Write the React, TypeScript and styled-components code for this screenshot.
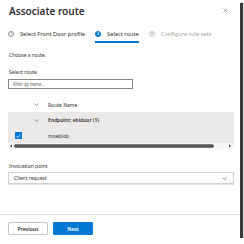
import React from "react";
import styled, { createGlobalStyle } from "styled-components";

const Global = createGlobalStyle`
  html, body { margin: 0; padding: 0; background: #ffffff; }
  body { font-family: "Noto Sans", "Open Sans", sans-serif; color: #323130; }
  * { box-sizing: border-box; }
`;

const Panel = styled.div`
  width: 240px;
  height: 238px;
  background: #fff;
  box-shadow: 3px 3px 1px 0 rgba(25, 25, 25, 0.85);
  display: flex;
  flex-direction: column;
`;

const Header = styled.div`
  display: flex;
  justify-content: space-between;
  align-items: flex-start;
  padding: 4px 12px 0 9px;
`;

const Title = styled.h1`
  margin: 0;
  font-size: 10px;
  font-weight: 600;
  line-height: 14px;
`;

const Close = styled.span`
  display: flex;
  margin-top: 4px;
`;

const Steps = styled.div`
  display: flex;
  padding-left: 8px;
  margin-top: 9px;
  gap: 10px;
`;

const Step = styled.div<{ $active?: boolean; $disabled?: boolean }>`
  display: flex;
  align-items: center;
  gap: 6px;
  height: 16px;
  font-size: 5.7px;
  white-space: nowrap;
  color: ${(p) => (p.$disabled ? "#a19f9d" : "#323130")};
  border-bottom: 2px solid ${(p) => (p.$active ? "#0078d4" : "transparent")};
`;

const Circle = styled.span<{ $active?: boolean; $disabled?: boolean }>`
  width: 6px;
  height: 6px;
  border-radius: 50%;
  border: 0.6px solid ${(p) => (p.$active ? "#0078d4" : p.$disabled ? "#c8c6c4" : "#8a8886")};
  background: ${(p) => (p.$active ? "#0078d4" : "transparent")};
  color: ${(p) => (p.$active ? "#fff" : "#a19f9d")};
  font-size: 3px;
  font-weight: 700;
  display: flex;
  align-items: center;
  justify-content: center;
  flex: none;
`;

const Body = styled.div`
  padding: 0 6px 0 8px;
  flex: 1;
  display: flex;
  flex-direction: column;
`;

const Text = styled.div`
  font-size: 5px;
  margin-left: 1px;
`;

const Intro = styled(Text)`
  margin-top: 9px;
`;

const Label = styled(Text)<{ $top: number }>`
  margin-top: ${(p) => p.$top}px;
`;

const Filter = styled.div`
  margin-top: 4px;
  width: 125px;
  height: 10px;
  border: 0.6px solid #8a8886;
  font-size: 4.5px;
  font-style: italic;
  color: #605e5c;
  display: flex;
  align-items: center;
  padding-left: 4px;
`;

const Table = styled.div`
  margin-top: 8px;
  display: flex;
  flex-direction: column;
`;

const Row = styled.div<{ $h: number }>`
  height: ${(p) => p.$h}px;
  display: grid;
  grid-template-columns: 20px 16px 1fr;
  align-items: center;
  font-size: 5px;
`;

const Cell = styled.span`
  padding-left: 4px;
`;

const Group = styled.div`
  background: #ebe9e7;
  display: flex;
  flex-direction: column;
`;

const Bold = styled(Cell)`
  font-weight: 600;
`;

const Check = styled.span`
  width: 7px;
  height: 7px;
  background: #0078d4;
  justify-self: center;
  margin-left: 1px;
  display: flex;
  align-items: center;
  justify-content: center;
`;

const ScrollBar = styled.div`
  display: block;
  height: 6px;
  line-height: 0;
  background: #f5f5f5;
`;

const Select = styled.div`
  margin-top: 3px;
  height: 12px;
  border: 0.6px solid #d2d0ce;
  box-shadow: 0 0.6px 0.6px rgba(0, 0, 0, 0.12);
  display: flex;
  align-items: center;
  justify-content: space-between;
  padding: 0 6px 0 5px;
  font-size: 5px;
`;

const Footer = styled.div`
  border-top: 0.8px solid #e1dfdd;
  padding: 7px 8px 0;
  height: 24px;
  display: flex;
  gap: 5px;
`;

const Button = styled.button<{ $primary?: boolean }>`
  width: 40px;
  height: 13px;
  padding: 0;
  font-family: inherit;
  font-size: 5px;
  font-weight: 600;
  border-radius: 1px;
  border: 0.6px solid ${(p) => (p.$primary ? "#0078d4" : "#c8c6c4")};
  background: ${(p) => (p.$primary ? "#0078d4" : "#fff")};
  color: ${(p) => (p.$primary ? "#fff" : "#323130")};
`;

const Chevron = () => (
  <svg width="5" height="3" viewBox="0 0 10 6" style={{ justifySelf: "center" }}>
    <path d="M1 1l4 4 4-4" fill="none" stroke="#605e5c" strokeWidth="1.2" />
  </svg>
);

export default function App() {
  return (
    <>
      <Global />
      <Panel>
        <Header>
          <Title>Associate route</Title>
          <Close>
            <svg width="5" height="5" viewBox="0 0 10 10">
              <path d="M1 1l8 8M9 1l-8 8" stroke="#605e5c" strokeWidth="1" />
            </svg>
          </Close>
        </Header>
        <Steps>
          <Step>
            <Circle>1</Circle>
            Select Front Door profile
          </Step>
          <Step $active>
            <Circle $active>2</Circle>
            Select route
          </Step>
          <Step $disabled>
            <Circle $disabled>3</Circle>
            Configure rule sets
          </Step>
        </Steps>
        <Body>
          <Intro>Choose a route.</Intro>
          <Label $top={11}>Select route</Label>
          <Filter>Filter by name...</Filter>
          <Table>
            <Row $h={15}>
              <span />
              <Chevron />
              <Cell>Route Name</Cell>
            </Row>
            <Group>
              <Row $h={16}>
                <span />
                <Chevron />
                <Bold>Endpoint: ebidoor (1)</Bold>
              </Row>
              <Row $h={15}>
                <Check>
                  <svg width="5" height="4" viewBox="0 0 10 8">
                    <path d="M1 4l3 3 5-6" fill="none" stroke="#fff" strokeWidth="1.5" />
                  </svg>
                </Check>
                <span />
                <Cell>moeblob</Cell>
              </Row>
            </Group>
            <ScrollBar>
              <svg width="226" height="6" viewBox="0 0 226 6">
                <path d="M4 1.5L2 3l2 1.5z" fill="#444" />
                <rect x="6" y="1.25" width="200" height="3.5" rx="1.75" fill="#555555" />
                <path d="M221 1.5l2 1.5-2 1.5z" fill="#444" />
              </svg>
            </ScrollBar>
          </Table>
          <Label $top={14}>Invocation point</Label>
          <Select>
            <span>Client request</span>
            <Chevron />
          </Select>
        </Body>
        <Footer>
          <Button>Previous</Button>
          <Button $primary>Next</Button>
        </Footer>
      </Panel>
    </>
  );
}
